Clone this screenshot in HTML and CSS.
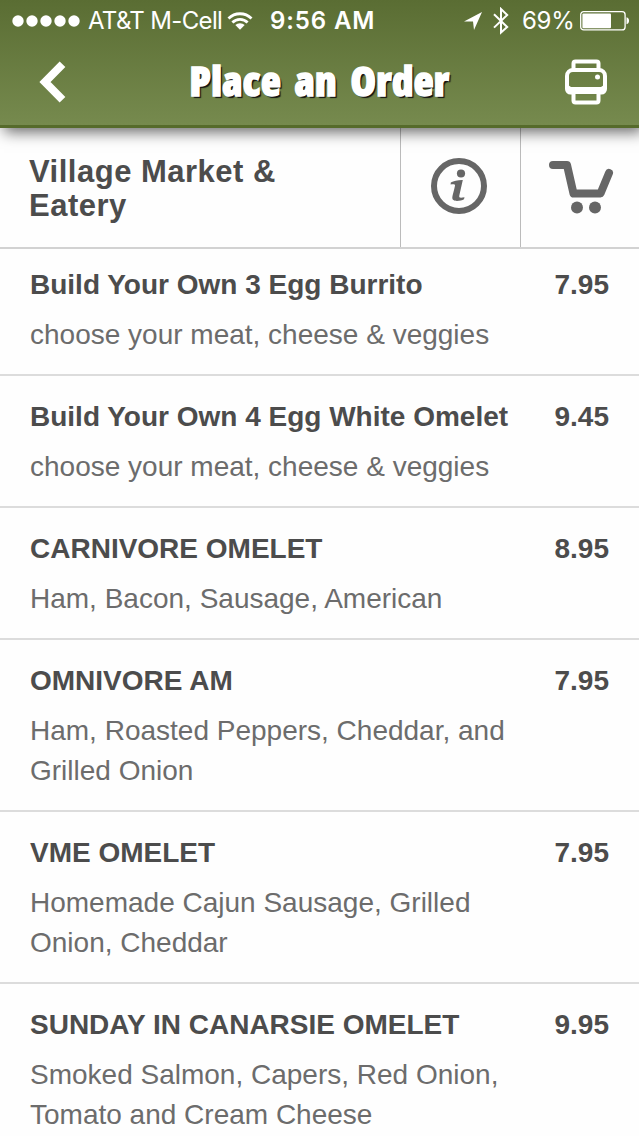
FILE: index.html
```html
<!DOCTYPE html>
<html lang="en">
<head>
  <meta charset="UTF-8">
  <title>Place an Order</title>
  <link rel="stylesheet" href="styles.css">
</head>
<body>
  <header class="header">
    <div class="status-bar">
      <svg class="signal" width="68" height="12" viewBox="0 0 68 12">
        <circle cx="6" cy="6" r="5.7"/><circle cx="20" cy="6" r="5.7"/><circle cx="34" cy="6" r="5.7"/><circle cx="48" cy="6" r="5.7"/><circle cx="62" cy="6" r="5.7"/>
      </svg>
      <span class="carrier">AT&amp;T M-Cell</span>
      <svg class="wifi" width="26" height="20" viewBox="0 0 26 20">
        <path d="M1.5 7.5a16.3 16.3 0 0 1 23 0M5.4 11.6a10.7 10.7 0 0 1 15.2 0"/>
        <path class="solid" d="M8.3 14.1a6.7 6.7 0 0 1 9.4 0L13 18.8z"/>
      </svg>
      <span class="time">9:56 AM</span>
      <svg class="location" width="18" height="18" viewBox="0 0 18 18"><path d="M0 9.5L18 0 10 18 9 9.5z"/></svg>
      <svg class="bluetooth" width="16" height="28" viewBox="0 0 16 28"><path d="M1 7.2L14.2 20 8 25.6V2l6.2 6L1 20.6"/></svg>
      <span class="battery-level">69%</span>
      <svg class="battery" width="50" height="20" viewBox="0 0 50 20">
        <rect class="outline" x=".7" y=".7" width="44.4" height="18.2" rx="3"/>
        <rect x="2.4" y="2.4" width="28.6" height="14.8" rx="1"/>
        <path d="M46.5 6.3c3.4.5 3.4 6.5 0 7z"/>
      </svg>
    </div>
    <nav class="nav-bar">
      <svg class="back" width="28" height="44" viewBox="0 0 28 44"><path d="M23.5 4.2L6 22 23.5 39.8"/></svg>
      <h1>Place an Order</h1>
      <svg class="printer" width="42" height="46" viewBox="0 0 42 46">
        <path d="M8.5 11V4.5a2 2 0 0 1 2-2h21a2 2 0 0 1 2 2V11"/>
        <path d="M8 33.5H5.5a3.5 3.5 0 0 1-3.5-3.5V17a6 6 0 0 1 6-6h26a6 6 0 0 1 6 6v13a3.5 3.5 0 0 1-3.5 3.5H34"/>
        <path class="solid" d="M3 26l3 2h30l3-2v6a3 3 0 0 1-3 3H6a3 3 0 0 1-3-3z"/>
        <path class="slot" d="M11 37h20v3H11z"/>
        <path d="M8.5 33v8.5a2 2 0 0 0 2 2h21a2 2 0 0 0 2-2V33"/>
        <circle class="solid" cx="32.5" cy="18" r="2.5"/>
      </svg>
    </nav>
  </header>

  <section class="store">
    <h2>Village Market &amp; Eatery</h2>
    <div class="store-button info">
      <svg width="58" height="58" viewBox="0 0 58 58">
        <circle class="ring" cx="29" cy="29" r="25"/>
        <circle cx="31" cy="16.5" r="4.1"/>
        <path d="M20.8 25.4c3-1.600 7-2.600 12-2.500l-3.500 15.600c-.5 2.200.6 2.700 5.200 1.700l-.5 2c-3.300 2-12.200 3.200-11.700-1.600.2-2.500 2.300-8.800 2.700-12 .2-1.500-1.400-1.600-4.400-1.200z"/>
      </svg>
    </div>
    <div class="store-button">
      <svg width="66" height="56" viewBox="0 0 66 56">
        <path class="basket" d="M5 7h14L25.5 35.500h27L61 15"/>
        <circle cx="29" cy="49.500" r="6"/><circle cx="47" cy="49.500" r="6"/>
      </svg>
    </div>
  </section>

  <main class="menu">
    <article class="item">
      <div class="item-top"><h3>Build Your Own 3 Egg Burrito</h3><span>7.95</span></div>
      <p>choose your meat, cheese &amp; veggies</p>
    </article>
    <article class="item">
      <div class="item-top"><h3>Build Your Own 4 Egg White Omelet</h3><span>9.45</span></div>
      <p>choose your meat, cheese &amp; veggies</p>
    </article>
    <article class="item">
      <div class="item-top"><h3>CARNIVORE OMELET</h3><span>8.95</span></div>
      <p>Ham, Bacon, Sausage, American</p>
    </article>
    <article class="item">
      <div class="item-top"><h3>OMNIVORE AM</h3><span>7.95</span></div>
      <p>Ham, Roasted Peppers, Cheddar, and Grilled Onion</p>
    </article>
    <article class="item">
      <div class="item-top"><h3>VME OMELET</h3><span>7.95</span></div>
      <p>Homemade Cajun Sausage, Grilled Onion, Cheddar</p>
    </article>
    <article class="item">
      <div class="item-top"><h3>SUNDAY IN CANARSIE OMELET</h3><span>9.95</span></div>
      <p>Smoked Salmon, Capers, Red Onion, Tomato and Cream Cheese</p>
    </article>
  </main>
</body>
</html>
```
FILE: styles.css
```css
* {
  box-sizing: border-box;
}

body {
  margin: 0;
  height: 1136px;
  overflow: hidden;
  font-family: "Liberation Sans", Arial, sans-serif;
  background: #fefefe;
  color: #4c4c4c;
}

h1, h2, h3, p {
  margin: 0;
}

.header {
  position: relative;
  height: 128px;
  background: linear-gradient(#5a6d33, #768a4e);
  border-bottom: 3px solid #566b2b;
  box-shadow: 4px 4px 14px rgba(0, 0, 0, 0.6);
  color: #fff;
}

.header svg {
  flex: none;
  fill: #fff;
}

.status-bar {
  display: flex;
  align-items: center;
  height: 41px;
  padding-left: 12px;
  font-family: Inter, sans-serif;
  font-size: 24px;
  line-height: 42px;
  white-space: nowrap;
}

.carrier {
  width: 134px;
  margin-left: 8px;
  letter-spacing: -0.65px;
}

.header .wifi {
  margin-left: 5px;
  fill: none;
  stroke: #fff;
  stroke-width: 2.8;
}

.header .solid {
  fill: #fff;
  stroke: none;
}

.time {
  width: 106px;
  margin-left: 17px;
  font-weight: 600;
  letter-spacing: 0.9px;
}

.location {
  margin-left: 88px;
}

.header .bluetooth {
  margin-left: 11px;
  fill: none;
  stroke: #fff;
  stroke-width: 2;
}

.battery-level {
  width: 52px;
  margin-left: 13px;
  letter-spacing: -0.3px;
}

.battery {
  margin-left: 6px;
}

.battery .outline {
  fill: none;
  stroke: #fff;
  stroke-width: 1.3;
}

.nav-bar {
  display: flex;
  align-items: center;
  justify-content: space-between;
  height: 82px;
  padding: 0 32px 0 39px;
}

.header .back {
  fill: none;
  stroke: #fff;
  stroke-width: 8;
}

.nav-bar h1 {
  padding: 0 0 5px 7px;
  font-family: "Open Sans", sans-serif;
  font-size: 41px;
  font-weight: 800;
  font-stretch: 75%;
  letter-spacing: 0.3px;
  word-spacing: 6px;
  line-height: 60px;
  white-space: nowrap;
  -webkit-text-stroke: 1.5px #fff;
  text-shadow: 2px 2px 1px #111;
}

.header .printer {
  fill: none;
  stroke: #fff;
  stroke-width: 4;
}

.header .slot {
  fill: #718649;
  stroke: none;
}

.store {
  display: flex;
  height: 121px;
  border-bottom: 2px solid #d2d2d2;
}

.store h2 {
  flex: none;
  width: 400px;
  padding: 27px 80px 0 29px;
  font-size: 31px;
  letter-spacing: 0.5px;
  line-height: 34px;
}

.store-button {
  display: flex;
  flex: none;
  align-items: center;
  justify-content: center;
  width: 120px;
  padding-bottom: 3px;
  border-left: 1px solid #bbb;
}

.store-button.info {
  padding-right: 3px;
}

.store-button svg {
  fill: #666;
}

.store-button .ring,
.store-button .basket {
  fill: none;
  stroke: #666;
  stroke-width: 6;
}

.store-button .basket {
  stroke-width: 8;
  stroke-linecap: round;
  stroke-linejoin: round;
}

.item {
  padding: 21px 30px 19px;
  border-bottom: 2px solid #dcdcdc;
}

.item:first-child {
  padding-top: 16px;
}

.item-top {
  display: flex;
  justify-content: space-between;
  margin-bottom: 10px;
  font-size: 28px;
  font-weight: bold;
  line-height: 40px;
  white-space: nowrap;
}

.item h3 {
  font-size: 28px;
}

.item p {
  width: 490px;
  font-size: 28px;
  line-height: 40px;
  color: #6c6c6c;
}
```
